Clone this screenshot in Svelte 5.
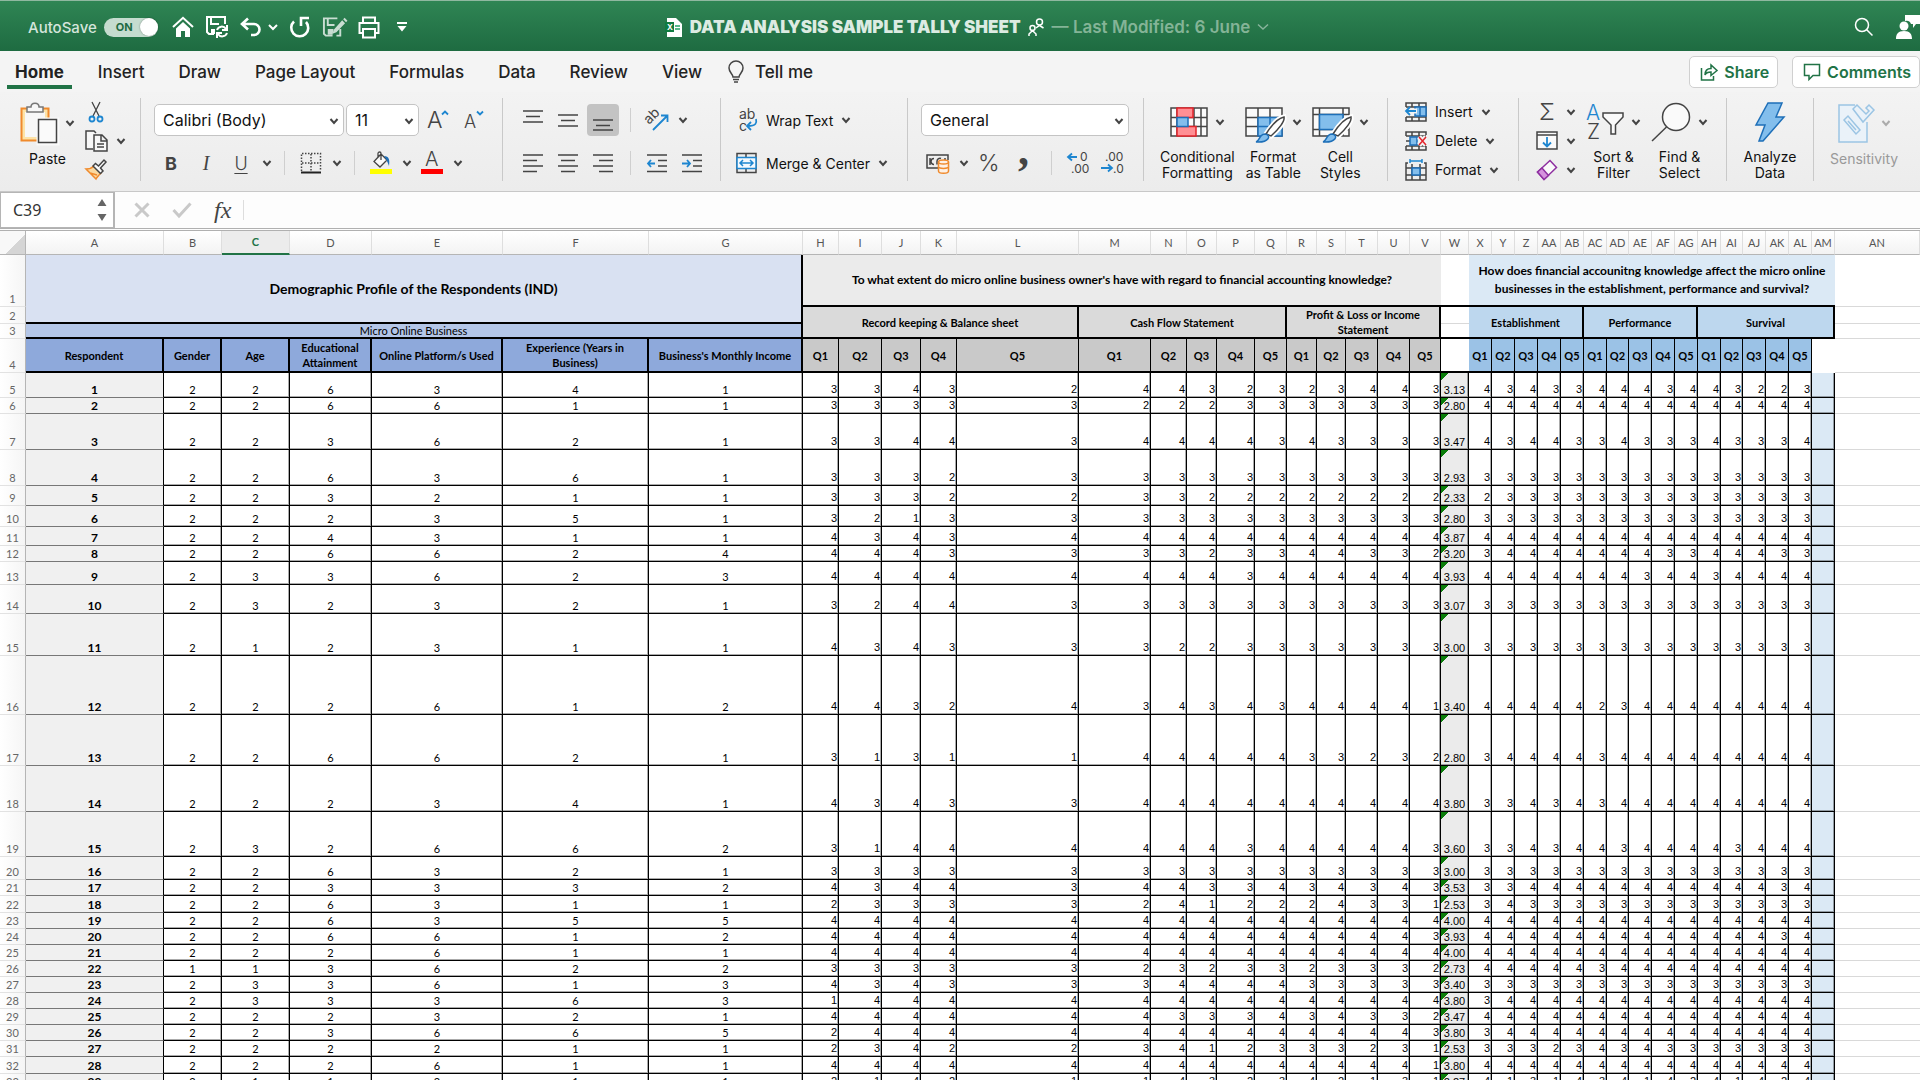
<!-- App.svelte -->
<script>
    const tabs = ["Home", "Insert", "Draw", "Page Layout", "Formulas", "Data", "Review", "View"];
    let activeTab = $state("Home");
    let autoSave = $state(true);
    let cellRef = $state("C39");
    let formula = $state("");

    const columns = [
        ["A", 138], ["B", 58], ["C", 68], ["D", 82], ["E", 131], ["F", 146], ["G", 154],
        ["H", 36], ["I", 43], ["J", 39], ["K", 36], ["L", 122], ["M", 72], ["N", 36],
        ["O", 30], ["P", 38], ["Q", 32], ["R", 30], ["S", 29], ["T", 32], ["U", 32],
        ["V", 31], ["W", 28], ["X", 23], ["Y", 23], ["Z", 23], ["AA", 23], ["AB", 23],
        ["AC", 23], ["AD", 22], ["AE", 23], ["AF", 23], ["AG", 23], ["AH", 23], ["AI", 22],
        ["AJ", 23], ["AK", 23], ["AL", 23], ["AM", 23], ["AN", null],
    ];

    const profileHeads = [
        "Respondent", "Gender", "Age", "Educational Attainment",
        "Online Platform/s Used", "Experience (Years in Business)", "Business's Monthly Income",
    ];
    const questions = [1, 2, 3, 4, 5, 1, 2, 3, 4, 5, 1, 2, 3, 4, 5];

    // row height, profile answers, knowledge answers, effect answers
    const respondents = [
        [25, "226341", "334324432323443", "434334443443223"],
        [16, "226611", "333332223333333", "444444444444444"],
        [36, "223621", "334434444343333", "434433433343334"],
        [36, "226361", "333233333333333", "333333333333333"],
        [20, "223211", "333223322222222", "233333333333333"],
        [21, "222351", "321333333333333", "333333333333333"],
        [19, "224311", "434344444444444", "444444444444444"],
        [16, "226624", "444333323344332", "344444443344433"],
        [23, "233623", "444444443444444", "444444434434444"],
        [29, "232321", "324433333333333", "333333333333333"],
        [42, "212311", "434333223333333", "333333333333333"],
        [59, "222612", "443243434344441", "444442344444444"],
        [51, "226621", "313114444433232", "344443444444444"],
        [46, "222341", "434334444444444", "334343444444444"],
        [45, "232662", "314444443444443", "334344344443444"],
        [23, "226321", "333333333333333", "333333333333333"],
        [16, "223332", "434434433434343", "334444444444434"],
        [17, "226311", "233332412224331", "343333333333333"],
        [16, "226355", "444444444444444", "444444444444444"],
        [16, "226612", "444444444444443", "444444444444434"],
        [16, "222611", "444444444444444", "444444444444444"],
        [16, "113622", "333332323323332", "444443444444444"],
        [16, "233613", "434333444433333", "333333333333333"],
        [16, "233363", "144444444444444", "344444444444444"],
        [16, "222321", "444444333434332", "444444444444444"],
        [16, "223665", "244444444444443", "344444444444444"],
        [16, "222211", "234223412333231", "333234343333333"],
        [17, "222611", "444444444444441", "444444444444444"],
        [16, "211211", "214211432342131", "413143414241424"],
    ];

    const mean = (answers) =>
        ([...answers].reduce((sum, a) => sum + Number(a), 0) / answers.length).toFixed(2);
</script>

{#snippet chev()}
    <svg class="chev" width="10" height="8" viewBox="0 0 10 8"><path d="M1.5 2 5 6l3.5-4" /></svg>
{/snippet}

{#snippet drop(label)}
    <button class="drop" aria-label={label}>{@render chev()}</button>
{/snippet}

<div class="app">
    <header class="titlebar">
        <div class="quick">
            <label class="autosave">
                AutoSave
                <span class="switch">
                    <input type="checkbox" bind:checked={autoSave} />
                    <span class="on">ON</span>
                    <span class="knob"></span>
                </span>
            </label>
            <button aria-label="Home">
                <svg width="22" height="22" viewBox="0 0 22 22"><path d="M1 11 11 1.800l10 9.200" class="w2" /><path class="fill" d="M4 12.500 11 6l7 6.500V21h-5v-6H9v6H4z" /></svg>
            </button>
            <button aria-label="Save">
                <svg width="24" height="24" viewBox="0 0 24 24">
                    <path class="w2" d="M9 19H4L2 17V2h18v7M6 2v7h8" /><path class="fill" d="M6 14h4v5H6z" />
                    <path class="w2" d="M12 15a5 5 0 0 1 9-1M22 10v5h-5M22 18a5 5 0 0 1-9 1M12 23v-5h5" />
                </svg>
            </button>
            <button aria-label="Undo">
                <svg width="22" height="20" viewBox="0 0 22 20"><path class="w3" d="M8 1.500 2 7l6 5.500M2.500 7H14a5 5 0 0 1 0 11h-3" /></svg>
            </button>
            <button class="near" aria-label="Undo history">
                <svg width="10" height="8" viewBox="0 0 10 8"><path class="w2" d="M1 2l4 4 4-4" /></svg>
            </button>
            <button aria-label="Redo">
                <svg width="22" height="22" viewBox="0 0 22 22"><path class="w3" d="M5 5.500a8.500 8.500 0 1 0 12 .5M12 10V2h8" /></svg>
            </button>
            <button class="dim" aria-label="Edit">
                <svg width="25" height="22" viewBox="0 0 26 22"><path class="w2" d="M11 20H4l-2-2V2h14M19 13v7h-4M6 3v6h7" /><path class="fill" d="M6 13h6l-1 6H6z" /><path class="fill" d="m12 14 9-10 3 3-9 9.500-4 1.500zM22 3l1.500-1.500 3 3L25 6z" /></svg>
            </button>
            <button aria-label="Print">
                <svg width="22" height="23" viewBox="0 0 22 23"><path class="w2" d="M5 6V1.500h12V6M5 17H1.500V7h19v10H17M5 13h12v8.500H5z" /></svg>
            </button>
            <button class="far" aria-label="Customise toolbar">
                <svg width="12" height="12" viewBox="0 0 12 12"><path class="w2" d="M1 2h10" /><path class="fill" d="M1.500 5h9L6 10.500z" /></svg>
            </button>
        </div>
        <div class="doc">
            <svg width="18" height="21" viewBox="0 0 18 21"><path fill="#fff" d="M2 1h9l6 6v13H2z" /><path fill="#107c41" d="M0 5h9v10H0z" /><text class="mark" x="2" y="13" font-size="8" font-weight="700">X</text><path stroke="#21a366" stroke-width="1.500" d="M10 9h5M10 12h5" /></svg>
            <strong>DATA ANALYSIS SAMPLE TALLY SHEET</strong>
            <svg class="people" width="17" height="19" viewBox="0 0 17 19"><path class="w1" d="M1 18v-2l3.500-3.500L8 16v2M8 10l3.500-2.500L15.500 10" /><circle class="w1" cx="4.500" cy="10" r="2.500" /><circle class="w1" cx="11.500" cy="4" r="3" /></svg>
            <span class="modified">— Last Modified: 6 June</span>
            <svg class="faded" width="12" height="8" viewBox="0 0 12 8"><path class="w1" d="M1 1.500 6 6l5-4.500" /></svg>
        </div>
        <div class="account">
            <button aria-label="Search">
                <svg width="20" height="20" viewBox="0 0 20 20"><circle class="w1" cx="8" cy="8" r="6.500" /><path class="w1" d="m12.500 12.500 6 6" /></svg>
            </button>
            <button aria-label="Share presence">
                <svg width="24" height="26" viewBox="0 0 24 26"><path class="fill" d="M9 1h15v9h-4l-3 4v-4h-2a5 5 0 0 0-6-3zM0 25c0-5 2-8 8-8s8 3 8 8z" /><circle class="fill" cx="8" cy="12" r="4.500" /></svg>
            </button>
        </div>
    </header>

    <nav class="tabs">
        {#each tabs as tab}
            <button class="tab" class:active={tab === activeTab} onclick={() => (activeTab = tab)}>{tab}</button>
        {/each}
        <button class="tab tell">
            <svg width="16" height="22" viewBox="0 0 16 22" fill="none" stroke="#444" stroke-width="1.500"><path d="M5 16c0-3-4-4.500-4-9a7 7 0 0 1 14 0c0 4.500-4 6-4 9zM5 18.500h6M6 21h4" /></svg>
            Tell me
        </button>
        <div class="actions">
            <button class="action">
                <svg width="18" height="18" viewBox="0 0 18 18" fill="none" stroke="#217346" stroke-width="1.500"><path d="M1.500 5v12h12v-4M5 12c0-5 3-6.500 6-6.500V2l6 5.500-6 5V9c-3 0-5 .5-6 3z" /></svg>
                Share
            </button>
            <button class="action">
                <svg width="18" height="18" viewBox="0 0 18 18" fill="none" stroke="#217346" stroke-width="1.500"><path d="M1.500 1.500h15v11H10l-4 4v-4H1.500z" /></svg>
                Comments
            </button>
        </div>
    </nav>

    <section class="ribbon">
        <div class="group clipboard">
            <button class="big">
                <span class="face">
                    <svg width="38" height="42" viewBox="0 0 38 42">
                        <path fill="#fde3a7" stroke="#f08a2c" stroke-width="2" d="M1.500 6.500h27v32h-27z" />
                        <path fill="#f7f7f7" d="M5 10h20v25H5z" />
                        <path fill="#f7f7f7" stroke="#777" stroke-width="1.500" d="M7 10V5h4c0-5 8-5 8 0h4v5z" />
                        <path fill="#fafafa" stroke="#fafafa" stroke-width="5" d="M19 18h18v23H19z" />
                        <path fill="#fafafa" stroke="#444" stroke-width="1.500" d="M18.500 17.500h18v23h-18z" />
                    </svg>
                    {@render chev()}
                </span>
                <span class="caption">Paste</span>
            </button>
            <div class="stack">
                <button class="line" aria-label="Cut">
                    <svg width="22" height="22" viewBox="0 0 22 22" fill="none" stroke="#444" stroke-width="1.300"><path d="M7 1 14 15M15 1 8 15" /><g stroke="#1e86d0" stroke-width="1.800"><circle cx="7" cy="18" r="2.500" /><circle cx="15" cy="18" r="2.500" /></g></svg>
                </button>
                <button class="line" aria-label="Copy">
                    <svg width="23" height="22" viewBox="0 0 23 22" fill="#f7f7f7" stroke="#444" stroke-width="1.500"><path d="M8 19H1V1h8l2 2" /><path d="M9 5h8l5 5v11H9zM16 5v6h6M12 14h7M12 17h7" /></svg>
                    {@render chev()}
                </button>
                <button class="line" aria-label="Format painter">
                    <svg width="22" height="21" viewBox="0 0 22 21" stroke-width="1.500"><path fill="#fbd9a0" stroke="#f08a2c" d="M1 10c4 0 6-1 8-3l7 7c-2 2-4 4-5 6z M5 14l7 2" /><path fill="#fafafa" stroke="#444" d="M8 7l2.500-2.500 3 2.500L19 1l2 2-5.500 6 2.500 3-2.500 2.500z" /></svg>
                </button>
            </div>
        </div>

        <div class="group font">
            <div class="row">
                <label class="pick family">
                    <select aria-label="Font"><option>Calibri (Body)</option></select>
                    {@render chev()}
                </label>
                <label class="pick size">
                    <select aria-label="Font size"><option>11</option></select>
                    {@render chev()}
                </label>
                <button class="tool" aria-label="Increase font size">
                    <svg width="22" height="24" viewBox="0 0 22 24"><text x="0" y="20" font-size="23" font-weight="300">A</text><path class="blue" d="M15 6.500 18 3.500l3 3" /></svg>
                </button>
                <button class="tool" aria-label="Decrease font size">
                    <svg width="22" height="24" viewBox="0 0 22 24"><text x="2" y="20" font-size="18" font-weight="300">A</text><path class="blue" d="M15 3.500 18 6.500l3-3" /></svg>
                </button>
            </div>
            <div class="row">
                <button class="tool bold">B</button>
                <button class="tool italic">I</button>
                <button class="tool under">U</button>
                {@render drop("Underline style")}
                <span class="sep"></span>
                <button class="tool" aria-label="Borders">
                    <svg width="22" height="22" viewBox="0 0 22 22" fill="none" stroke="#444"><path stroke-width="1.500" stroke-dasharray="1.500 1.500" d="M1.500 19V1.500h19V19M11 2v17M2 11h18" /><path stroke="#222" stroke-width="2" d="M1 20.500h20" /></svg>
                </button>
                {@render drop("Border style")}
                <span class="sep"></span>
                <button class="tool" aria-label="Fill colour">
                    <svg width="22" height="24" viewBox="0 0 22 24"><path fill="#fafafa" stroke="#444" stroke-width="1.300" d="M11 3 4 10.500l6 5.500 7-7zM8 7V2.500c0-2 3-2 3 0V9" /><path fill="#1e6fb8" d="M14 5c5 0 6 4 5 10-1-3-2-5-3-7z" /><path fill="#ff0" d="M0 18h22v5H0z" /></svg>
                </button>
                {@render drop("Fill colours")}
                <button class="tool" aria-label="Font colour">
                    <svg width="22" height="24" viewBox="0 0 22 24"><text x="4" y="15" font-size="20" font-weight="300">A</text><path fill="red" d="M0 18h22v5H0z" /></svg>
                </button>
                {@render drop("Font colours")}
            </div>
        </div>

        <div class="group align">
            <div class="row">
                <button class="tool" aria-label="Top align"><svg width="20" height="22" viewBox="0 0 20 22" class="bars"><path d="M0 2h20M3 7.500h14M0 13h20" /></svg></button>
                <button class="tool" aria-label="Middle align"><svg width="20" height="22" viewBox="0 0 20 22" class="bars"><path d="M0 6h20M3 11.500h14M0 17h20" /></svg></button>
                <button class="tool pressed" aria-label="Bottom align"><svg width="20" height="22" viewBox="0 0 20 22" class="bars"><path d="M0 11h20M3 16.500h14M0 21h20" /></svg></button>
                <span class="sep"></span>
                <button class="tool" aria-label="Orientation">
                    <svg width="22" height="22" viewBox="0 0 22 22"><text x="3" y="16" font-size="14" transform="rotate(-45 3 16)">ab</text><path class="blue" d="M7 21 21 7M15 6.500h6.500V13" /></svg>
                </button>
                {@render drop("Orientation options")}
            </div>
            <div class="row">
                <button class="tool" aria-label="Align left"><svg width="20" height="20" viewBox="0 0 20 20" class="bars"><path d="M0 2h20M0 7.500h14M0 13h20M0 18.500h14" /></svg></button>
                <button class="tool" aria-label="Centre"><svg width="20" height="20" viewBox="0 0 20 20" class="bars"><path d="M0 2h20M3 7.500h14M0 13h20M3 18.500h14" /></svg></button>
                <button class="tool" aria-label="Align right"><svg width="20" height="20" viewBox="0 0 20 20" class="bars"><path d="M0 2h20M6 7.500h14M0 13h20M6 18.500h14" /></svg></button>
                <span class="sep"></span>
                <button class="tool" aria-label="Decrease indent"><svg width="20" height="20" viewBox="0 0 20 20" class="bars"><path d="M0 2h20M11 7.500h9M11 13h9M0 18.500h20" /><path class="blue" d="M8 10.500H1M4 7l-3 3.500L4 14" /></svg></button>
                <button class="tool" aria-label="Increase indent"><svg width="20" height="20" viewBox="0 0 20 20" class="bars"><path d="M0 2h20M11 7.500h9M11 13h9M0 18.500h20" /><path class="blue" d="M0 10.500h8M5 7l3 3.500L5 14" /></svg></button>
            </div>
        </div>

        <div class="group wrap">
            <div class="row">
                <button class="line">
                    <svg width="24" height="24" viewBox="0 0 24 24"><text x="5" y="11" font-size="14">ab</text><text x="5" y="23" font-size="14">c</text><path class="blue" d="M22 11c1 4 0 7-8 7M17 14l-4 4 4 4" /></svg>
                    Wrap Text {@render chev()}
                </button>
            </div>
            <div class="row">
                <button class="line">
                    <svg width="24" height="22" viewBox="0 0 24 22" fill="none" stroke="#444" stroke-width="1.500"><path d="M3 1.500h19v19H3zM12 1v4M12 17v4" /><path stroke="#1e86d0" fill="#f3f9fe" d="M3 5.500h19v11H3zM6 11h13M9 8l-3 3 3 3M16 8l3 3-3 3" /></svg>
                    Merge &amp; Center {@render chev()}
                </button>
            </div>
        </div>

        <div class="group number">
            <div class="row">
                <label class="pick format">
                    <select aria-label="Number format"><option>General</option></select>
                    {@render chev()}
                </label>
            </div>
            <div class="row">
                <button class="tool" aria-label="Currency">
                    <svg width="24" height="22" viewBox="0 0 24 22" fill="none" stroke="#444" stroke-width="1.500"><path d="M12 16H1V3h21v5M8 6.500a3 3 0 1 0 0 6M15 6.500a3 3 0 0 0-4 3v3M4 6v7M19 6v2" /><g stroke="#f08a2c" fill="#fdf1e6"><path d="M12.500 10v9c0 3 10 3 10 0v-9" /><path d="M12.500 14.500c0 2.500 10 2.500 10 0" /><ellipse cx="17.500" cy="10" rx="5" ry="2" /></g></svg>
                </button>
                {@render drop("Currencies")}
                <button class="tool" aria-label="Percent"><svg width="24" height="24" viewBox="0 0 24 24"><text x="1" y="20" font-size="23" font-weight="300">%</text></svg></button>
                <button class="tool" aria-label="Comma style"><svg width="16" height="24" viewBox="0 0 16 24"><text class="serif" x="2" y="14" font-size="44" font-weight="700">,</text></svg></button>
                <span class="sep"></span>
                <button class="tool" aria-label="Increase decimal"><svg width="24" height="24" viewBox="0 0 24 24"><text x="14" y="10" font-size="12">0</text><text x="5" y="22" font-size="12">.00</text><path class="blue" d="M11 6H2M6 2.500 2 6l4 3.500" /></svg></button>
                <button class="tool" aria-label="Decrease decimal"><svg width="24" height="24" viewBox="0 0 24 24"><text x="4" y="10" font-size="12">.00</text><text x="12" y="22" font-size="12">.0</text><path class="blue" d="M0 17h11M7 13.500l4 3.500-4 3.500" /></svg></button>
            </div>
        </div>

        <div class="group styles">
            <button class="big">
                <span class="face">
                    <svg width="38" height="30" viewBox="0 0 38 30" fill="#fafafa" stroke="#444" stroke-width="1.500"><path d="M1 1h36v28H1zM1 10.500h36M1 19.500h36M7 1v28M24 1v28M31 1v28" /><path fill="#ff8f94" stroke="#e3242b" d="M7 1h16v9.500H7zM7 19.500h19V29H7z" /><path fill="#83beec" stroke="#1e6fb8" d="M7 10.500h11v9H7z" /></svg>
                    {@render chev()}
                </span>
                <span class="caption">Conditional<br />Formatting</span>
            </button>
            <button class="big">
                <span class="face">
                    <svg width="40" height="30" viewBox="0 0 40 30" stroke-width="1.500"><path fill="#fafafa" stroke="#444" d="M1 1h36v28H1zM1 10.500h36M1 19.500h36M13 1v28M25 1v28" /><path fill="#83beec" stroke="#1e6fb8" d="M13 10.500h24V29H13zM25 10v19M13 19.500h24" /><path fill="#fff" stroke="#fff" stroke-width="5" d="M21 27C28 16 34 11 39 10c1 4-5 12-13 19z" /><path fill="#fff" stroke="#444" d="M21 27C28 16 34 11 39 10c1 4-5 12-13 19z" /><path fill="#83beec" stroke="#1e6fb8" d="M11 35c4-1 3-8 9-8 7 1 4 9-9 8z" /></svg>
                    {@render chev()}
                </span>
                <span class="caption">Format<br />as Table</span>
            </button>
            <button class="big">
                <span class="face">
                    <svg width="40" height="30" viewBox="0 0 40 30" stroke-width="1.500"><path fill="#fafafa" stroke="#444" d="M1 1h36v28H1zM1 7.500h36M1 22.500h36M7.500 1v28M31 1v28" /><path fill="#83beec" stroke="#1e6fb8" d="M7.500 7.500H31v15H7.500z" /><path fill="#fff" stroke="#fff" stroke-width="5" d="M21 27C28 16 34 11 39 10c1 4-5 12-13 19z" /><path fill="#fff" stroke="#444" d="M21 27C28 16 34 11 39 10c1 4-5 12-13 19z" /><path fill="#83beec" stroke="#1e6fb8" d="M11 35c4-1 3-8 9-8 7 1 4 9-9 8z" /></svg>
                    {@render chev()}
                </span>
                <span class="caption">Cell<br />Styles</span>
            </button>
        </div>

        <div class="group cells">
            <div class="stack">
                <button class="line">
                    <svg width="22" height="20" viewBox="0 0 22 20" fill="none" stroke="#444" stroke-width="1.500"><path d="M1 5V1h20v18H1v-4M1 5h20M7 1v4M14 1v4M1 15h20M7 15v4M14 15v4" /><path fill="#83beec" stroke="#1e6fb8" d="M10 5h11v9H10zM15 5v9" /><path stroke="#f3f3f3" stroke-width="5" d="M12 9H2" /><path stroke="#1e86d0" stroke-width="1.800" d="M11 9H1M5 5 1 9l4 4" /></svg>
                    Insert {@render chev()}
                </button>
                <button class="line">
                    <svg width="22" height="20" viewBox="0 0 22 20" fill="none" stroke="#444" stroke-width="1.500"><path d="M1 5V1h20v3M1 5h20M7 1v4M14 1v4M1 15h20M1 15v4h20v-4M7 15v4M14 15v4M1 10h4" /><path fill="#83beec" stroke="#1e6fb8" d="M5 6h7v8H5z" /><path stroke="#f3f3f3" stroke-width="5" d="m14 6 7 8M21 6l-7 8" /><path stroke="#e3242b" d="m14 6 7 8M21 6l-7 8" /></svg>
                    Delete {@render chev()}
                </button>
                <button class="line">
                    <svg width="22" height="22" viewBox="0 0 22 22" fill="none" stroke="#444" stroke-width="1.500"><path d="M3 4H1v17h20V4h-2M1 9h20M1 16h20M7 5v16M15 5v16" /><path fill="#83beec" stroke="#1e6fb8" d="M7 9h8v7H7z" /><path stroke="#1e86d0" d="M5 2h12M5 0v4M17 0v4" /></svg>
                    Format {@render chev()}
                </button>
            </div>
        </div>

        <div class="group editing">
            <div class="stack">
                <button class="line" aria-label="AutoSum"><svg width="22" height="22" viewBox="0 0 22 22"><text x="3" y="19" font-size="23" font-weight="300">Σ</text></svg>{@render chev()}</button>
                <button class="line" aria-label="Fill"><svg width="22" height="19" viewBox="0 0 22 19" fill="#fafafa" stroke="#444" stroke-width="1.500"><path d="M1 1h20v17H1zM1 4h20" /><path class="blue" d="M11 6v9M7 11.500l4 4 4-4" /></svg>{@render chev()}</button>
                <button class="line" aria-label="Clear"><svg width="22" height="22" viewBox="0 0 22 22" fill="#fafafa" stroke="#8e2fa0" stroke-width="1.500"><path d="M1.500 13 14 1.500l6.500 7L8 20.500z" /><path fill="#d592dd" d="M1.500 13 6 9l6.500 7.500L8 20.500z" /></svg>{@render chev()}</button>
            </div>
            <button class="big">
                <span class="face">
                    <svg width="38" height="38" viewBox="0 0 38 38"><text x="0" y="17" font-size="21" class="sky" font-weight="300">A</text><text x="1" y="36" font-size="21" font-weight="300">Z</text><path fill="#fafafa" stroke="#444" stroke-width="1.500" d="M17 10h20v4l-7.500 8v9H25v-9l-8-8z" /></svg>
                    {@render chev()}
                </span>
                <span class="caption">Sort &amp;<br />Filter</span>
            </button>
            <button class="big">
                <span class="face">
                    <svg width="40" height="40" viewBox="0 0 40 40" fill="#fafafa" stroke="#444" stroke-width="1.500"><circle cx="25" cy="15" r="13.500" /><path d="M15.500 25 1 39" /></svg>
                    {@render chev()}
                </span>
                <span class="caption">Find &amp;<br />Select</span>
            </button>
        </div>

        <div class="group analyze">
            <button class="big">
                <span class="face">
                    <svg width="30" height="40" viewBox="0 0 30 40" fill="#83beec" stroke="#1e6fb8" stroke-width="1.500"><path d="M13 1h14l-6 14h8L8 39H4l6-16H1z" /></svg>
                </span>
                <span class="caption">Analyze<br />Data</span>
            </button>
        </div>

        <div class="group sensitivity">
            <button class="big" disabled>
                <span class="face">
                    <svg width="36" height="40" viewBox="0 0 36 40" fill="#eaf2f9" stroke="#9cc5e4" stroke-width="1.500"><path d="M17 2H1v37h28V19" /><path d="m6 17 4-4 12 14-4 4zM10 18l8 9M15 6l4-4 9 9 3-3-3-3 3-3 5 5-11 12z" /></svg>
                    {@render chev()}
                </span>
                <span class="caption">Sensitivity</span>
            </button>
        </div>
    </section>

    <section class="formula-bar">
        <div class="name-box">
            <input aria-label="Name box" bind:value={cellRef} />
            <svg width="10" height="24" viewBox="0 0 10 24" fill="#666"><path d="M5 1l4.500 7h-9zM5 23l4.500-7h-9z" /></svg>
        </div>
        <button aria-label="Cancel"><svg width="16" height="16" viewBox="0 0 16 16" fill="none" stroke="#c9c9c9" stroke-width="3"><path d="m1.500 1.500 13 13M14.500 1.500l-13 13" /></svg></button>
        <button aria-label="Enter"><svg width="20" height="16" viewBox="0 0 20 16" fill="none" stroke="#c9c9c9" stroke-width="3"><path d="m1.500 8 5.500 6L18.500 1.500" /></svg></button>
        <button class="fx">fx</button>
        <input class="formula" aria-label="Formula" bind:value={formula} />
    </section>

    <main class="sheet">
        <table>
            <colgroup>
                <col style:width="26px" />
                {#each columns as [name, width]}
                    <col style:width={width ? `${width}px` : "auto"} />
                {/each}
            </colgroup>
            <thead>
                <tr>
                    <th class="corner"></th>
                    {#each columns as [name]}
                        <th class="letter" class:selected={name === "C"} scope="col">{name}</th>
                    {/each}
                </tr>
            </thead>
            <tbody>
                <tr style:height="52px">
                    <th class="num">1</th>
                    <td class="profile title thick-b thick-r" colspan="7" rowspan="2">Demographic Profile of the Respondents (IND)</td>
                    <td class="know question thick-b" colspan="15">To what extent do micro online business owner's have with regard to financial accounting knowledge?</td>
                    <td class="thick-b"></td>
                    <td class="effect question thick-b" colspan="16">How does financial accounitng knowledge affect the micro online businesses in the establishment, performance and survival?</td>
                    <td class="open"></td>
                </tr>
                <tr style:height="17px">
                    <th class="num">2</th>
                    <td class="know-sub head thick" colspan="5" rowspan="2">Record keeping &amp; Balance sheet</td>
                    <td class="know-sub head thick" colspan="5" rowspan="2">Cash Flow Statement</td>
                    <td class="know-sub head thick" colspan="5" rowspan="2">Profit &amp; Loss or Income Statement</td>
                    <td class="open"></td>
                    <td class="effect-sub head thick" colspan="5" rowspan="2">Establishment</td>
                    <td class="effect-sub head thick" colspan="5" rowspan="2">Performance</td>
                    <td class="effect-sub head thick" colspan="6" rowspan="2">Survival</td>
                    <td class="open"></td>
                </tr>
                <tr style:height="15px">
                    <th class="num">3</th>
                    <td class="micro thick" colspan="7">Micro Online Business</td>
                    <td class="thick-b"></td>
                    <td class="open"></td>
                </tr>
                <tr style:height="34px">
                    <th class="num">4</th>
                    {#each profileHeads as head}
                        <td class="field head thick">{head}</td>
                    {/each}
                    {#each questions as q}
                        <td class="know-q head thick-b">Q{q}</td>
                    {/each}
                    <td class="thick-b"></td>
                    {#each questions as q}
                        <td class="effect-q head thick-b">Q{q}</td>
                    {/each}
                    <td></td>
                    <td class="open"></td>
                </tr>
                {#each respondents as [height, profile, know, effect], i}
                    <tr style:height="{height}px">
                        <th class="num">{i + 5}</th>
                        <td class="who">{i + 1}</td>
                        {#each profile as answer}
                            <td class="cell mid">{answer}</td>
                        {/each}
                        {#each know as answer}
                            <td class="cell">{answer}</td>
                        {/each}
                        <td class="cell mean">{mean(know)}</td>
                        {#each effect as answer}
                            <td class="cell">{answer}</td>
                        {/each}
                        <td class="cell spare"></td>
                        <td class="open"></td>
                    </tr>
                {/each}
            </tbody>
        </table>
    </main>
</div>

<style>
    :global(body) {
        margin: 0;
        overflow: hidden;
    }

    .app {
        display: flex;
        flex-direction: column;
        height: 100vh;
        background: #fff;
        color: #222;
        font-family: Inter, "Liberation Sans", sans-serif;
        font-size: 14px;
    }

    button {
        display: flex;
        align-items: center;
        justify-content: center;
        padding: 0;
        border: 0;
        background: none;
        color: inherit;
        font: inherit;
    }

    svg {
        display: block;
        flex: none;
        overflow: visible;
    }

    svg text {
        fill: #444;
        font-family: Inter, sans-serif;
        stroke: none;
    }

    svg text.sky {
        fill: #1e86d0;
    }

    svg text.mark {
        fill: #fff;
    }

    svg text.serif {
        font-family: "Liberation Serif", serif;
    }

    .blue {
        fill: none;
        stroke: #1e86d0;
        stroke-width: 1.8;
    }

    .bars {
        fill: none;
        stroke: #444;
        stroke-width: 1.6;
    }

    .chev {
        fill: none;
        stroke: #444;
        stroke-width: 2;
    }

    /* title bar */
    .titlebar {
        display: flex;
        align-items: center;
        box-sizing: border-box;
        height: 51px;
        padding-top: 2px;
        border-top: 1px solid #8fb8a0;
        background: linear-gradient(#2f8554, #1e6b41);
        color: #fff;
    }

    .w1,
    .w2,
    .w3 {
        fill: none;
        stroke: #fff;
        stroke-width: 1.5;
    }

    .w2 {
        stroke-width: 2;
    }

    .w3 {
        stroke-width: 2.6;
    }

    .fill {
        fill: #fff;
    }

    .quick {
        display: flex;
        flex: 1;
        align-items: center;
        gap: 11px;
        padding-left: 28px;
    }

    .quick .near {
        margin-left: -5px;
    }

    .quick .far {
        margin-left: 5px;
    }

    .dim {
        opacity: 0.75;
    }

    .autosave {
        display: flex;
        align-items: center;
        gap: 7px;
        margin-right: 3px;
        color: #d5e5db;
        font-size: 15px;
        font-weight: 500;
    }

    .switch {
        display: flex;
        position: relative;
        align-items: center;
        justify-content: space-between;
        box-sizing: border-box;
        width: 54px;
        height: 19px;
        padding-left: 12px;
        border-radius: 10px;
        background: #c5dccf;
        color: #1f6b42;
    }

    .switch input {
        position: absolute;
        inset: 0;
        margin: 0;
        opacity: 0;
    }

    .on {
        font-size: 11px;
        font-weight: 700;
    }

    .knob {
        width: 18px;
        height: 18px;
        border-radius: 50%;
        background: #fff;
        box-shadow: 0 0 2px #0006;
    }

    .doc {
        display: flex;
        align-items: center;
        gap: 7px;
        padding-right: 14px;
        color: #dcebe2;
        font-size: 17px;
        font-weight: 700;
        white-space: nowrap;
    }

    .modified {
        color: #84b497;
        font-weight: 600;
    }

    .faded {
        opacity: 0.45;
    }

    .account {
        display: flex;
        flex: 1;
        align-items: center;
        justify-content: flex-end;
        gap: 22px;
    }

    /* tabs */
    .tabs {
        display: flex;
        align-items: center;
        gap: 18px;
        height: 41px;
        padding-left: 7px;
        background: #f4f4f4;
    }

    .tab {
        box-sizing: border-box;
        height: 34px;
        padding: 0 8px;
        border-top: 4px solid transparent;
        border-bottom: 4px solid transparent;
        font-size: 17px;
        font-weight: 500;
        white-space: nowrap;
    }

    .tab.active {
        border-bottom-color: #217346;
        font-weight: 700;
    }

    .tell {
        gap: 11px;
        padding: 0;
    }

    .actions {
        display: flex;
        gap: 14px;
        margin-left: auto;
    }

    .action {
        box-sizing: border-box;
        gap: 6px;
        height: 32px;
        padding: 0 8px 0 10px;
        border: 1px solid #d0d0d0;
        border-radius: 5px;
        background: #fff;
        color: #217346;
        font-size: 16px;
        font-weight: 600;
    }

    /* ribbon */
    .ribbon {
        display: flex;
        flex: none;
        box-sizing: border-box;
        height: 100px;
        padding-top: 6px;
        border-bottom: 1px solid #c8c8c8;
        background: linear-gradient(#f3f3f3, #ececec);
        color: #111;
    }

    .group {
        display: flex;
        flex: none;
        box-sizing: border-box;
        height: 83px;
        border-right: 1px solid #c9c9c9;
    }

    .clipboard {
        gap: 10px;
        width: 141px;
        padding-left: 20px;
    }

    .font,
    .align,
    .wrap,
    .number {
        flex-direction: column;
        gap: 11px;
        padding: 6px 0 0 13px;
    }

    .font {
        width: 362px;
    }

    .align {
        width: 218px;
    }

    .wrap {
        width: 187px;
    }

    .number {
        width: 236px;
    }

    .styles {
        gap: 10px;
        width: 244px;
        padding-left: 16px;
    }

    .cells {
        width: 131px;
        padding-left: 17px;
    }

    .editing {
        gap: 10px;
        width: 208px;
        padding-left: 17px;
    }

    .analyze {
        justify-content: center;
        width: 87px;
    }

    .sensitivity {
        padding-left: 16px;
        border-right: 0;
    }

    .row {
        display: flex;
        align-items: center;
        height: 32px;
    }

    .tool {
        width: 32px;
        height: 32px;
        margin: 0 2px 0 1px;
        color: #444;
        font-size: 19px;
    }

    .tool.pressed {
        border-radius: 4px;
        background: #c3c3c3;
    }

    .tool.bold {
        font-size: 18px;
        font-weight: 700;
    }

    .tool.italic {
        font-family: "Liberation Serif", serif;
        font-size: 20px;
        font-style: italic;
    }

    .tool.under {
        font-size: 18px;
        font-weight: 300;
        text-decoration: underline;
        text-underline-offset: 3px;
    }

    .drop {
        width: 16px;
        height: 32px;
    }

    .sep {
        width: 1px;
        height: 24px;
        margin: 0 9px;
        background: #cfcfcf;
    }

    .pick {
        position: relative;
        box-sizing: border-box;
        height: 32px;
        margin-right: 2px;
        border: 1px solid #c4c4c4;
        border-radius: 5px;
        background: #fff;
    }

    .pick select {
        width: 100%;
        height: 100%;
        padding: 0 8px;
        border: 0;
        appearance: none;
        background: none;
        color: #111;
        font: inherit;
        font-size: 16px;
    }

    .pick .chev {
        position: absolute;
        top: 12px;
        right: 4px;
        pointer-events: none;
    }

    .family {
        width: 190px;
    }

    .size {
        width: 73px;
    }

    .format {
        width: 208px;
    }

    .stack {
        display: flex;
        flex-direction: column;
        gap: 6px;
        padding-top: 2px;
    }

    .line {
        justify-content: flex-start;
        gap: 8px;
        height: 24px;
        white-space: nowrap;
    }

    .big {
        flex-direction: column;
        justify-content: flex-start;
        gap: 3px;
    }

    .big:disabled {
        color: #999;
    }

    .big:disabled .chev {
        opacity: 0.4;
    }

    .face {
        display: flex;
        align-items: center;
        gap: 7px;
        height: 50px;
    }

    .caption {
        line-height: 16px;
        text-align: center;
    }

    /* formula bar */
    .formula-bar {
        display: flex;
        flex: none;
        align-items: center;
        gap: 22px;
        box-sizing: border-box;
        height: 39px;
        border-bottom: 3px double #b0b0b0;
        background: #fdfdfd;
    }

    .name-box {
        display: flex;
        align-items: center;
        box-sizing: border-box;
        width: 115px;
        height: 100%;
        margin-right: -3px;
        padding: 0 6px 0 12px;
        border: 1px solid #b5b5b5;
        border-right-width: 2px;
        background: #fff;
    }

    .name-box input {
        flex: 1;
        min-width: 0;
        padding: 0;
        border: 0;
        color: #333;
        font-family: "Noto Sans", sans-serif;
        font-size: 16px;
    }

    .fx {
        color: #444;
        font-family: "Liberation Serif", serif;
        font-size: 24px;
        font-style: italic;
    }

    .formula {
        flex: 1;
        height: 20px;
        margin-left: -10px;
        padding: 0 8px;
        border: 0;
        border-left: 1px solid #ddd;
        background: none;
        font: inherit;
    }

    /* sheet */
    .sheet {
        flex: 1;
        min-height: 0;
        overflow: hidden;
    }

    table {
        width: 100%;
        min-width: 1880px;
        table-layout: fixed;
        border-collapse: separate;
        border-spacing: 0;
        color: #000;
        font-family: Lato, sans-serif;
        font-size: 11px;
        line-height: 14px;
    }

    th,
    td {
        box-sizing: border-box;
        padding: 0;
        text-align: center;
    }

    .corner,
    .letter {
        height: 24px;
        border-right: 1px solid #dedede;
        border-bottom: 1px solid #b5b5b5;
        background: linear-gradient(#fff, #f3f3f3);
        color: #555;
        font-weight: 400;
    }

    .corner {
        border-right-color: #b5b5b5;
        background: linear-gradient(135deg, #f8f8f8 60%, #d5d5d5 60%);
    }

    .letter.selected {
        border-bottom: 2px solid #217346;
        background: #ececec;
        color: #217346;
        font-weight: 700;
    }

    .num {
        border-right: 1px solid #b5b5b5;
        border-bottom: 1px solid #e2e2e2;
        background: linear-gradient(90deg, #fff, #f5f5f5);
        color: #666;
        font-weight: 400;
        vertical-align: bottom;
    }

    .open {
        border-bottom: 1px solid #d9d9d9;
    }

    .head {
        font-weight: 700;
        line-height: 15px;
    }

    .question {
        font-size: 12px;
        font-weight: 700;
        line-height: 18px;
    }

    .title {
        font-size: 14px;
        font-weight: 700;
    }

    .thick,
    .thick-b {
        border-bottom: 2px solid #000;
    }

    .thick,
    .thick-r {
        border-right: 2px solid #000;
    }

    .profile {
        background: #d9e1f2;
    }

    .micro {
        background: #b4c6e7;
        line-height: 12px;
    }

    .field {
        background: #8ea9db;
    }

    .know {
        background: #ebebeb;
    }

    .know-sub {
        background: #dadada;
    }

    .know-q {
        border-right: 1px solid #000;
        background: #c9c9c9;
    }

    .effect {
        padding: 0 8px;
        background: #dbe9f5;
    }

    .effect-sub {
        background: #bdd7ee;
    }

    .effect-q {
        border-right: 1px solid #000;
        background: #9bc2e6;
    }

    .who {
        border-right: 1px solid #000;
        border-bottom: 1px solid #777;
        background: #f0f0f0;
        font-size: 12px;
        font-weight: 700;
        vertical-align: bottom;
    }

    .cell {
        padding: 0 1px 1px 0;
        border-right: 1px solid #000;
        border-bottom: 1px solid #000;
        box-shadow: inset -1px -1px #0005;
        font-family: "Liberation Sans", sans-serif;
        text-align: right;
        vertical-align: bottom;
    }

    .cell.mid {
        padding: 0;
        font-family: Lato, sans-serif;
        text-align: center;
    }

    /* the green corner marks an inconsistent formula */
    .cell.mean {
        padding: 0;
        background: linear-gradient(135deg, #0a7d0a 5px, #ebebeb 5px);
        text-align: center;
    }

    .cell.spare {
        background: #dbe9f5;
    }
</style>
